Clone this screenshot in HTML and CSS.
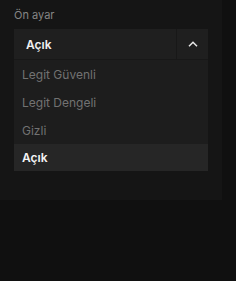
FILE: index.html
```html
<!DOCTYPE html>
<html>
<head>
<meta charset="utf-8">
<link rel="stylesheet" href="styles.css">
</head>
<body>
<div class="panel">
  <div class="label">Ön ayar</div>
  <div class="select">
    <div class="value">Açık</div>
    <div class="toggle">
      <svg width="10" height="6" viewBox="0 0 10 6"><path d="M1 5.2 L5 1.2 L9 5.2" fill="none" stroke="#e8e8e8" stroke-width="1.5"/></svg>
    </div>
  </div>
  <div class="list">
    <div class="item">Legit Güvenli</div>
    <div class="item">Legit Dengeli</div>
    <div class="item">Gizli</div>
    <div class="item active">Açık</div>
  </div>
</div>
</body>
</html>
```
FILE: styles.css
```css
html, body {
  margin: 0;
  padding: 0;
  background: #101010;
  font-family: Inter, "Noto Sans", sans-serif;
}
.panel {
  width: 194px;
  height: 192px;
  padding: 8px 14px 0 14px;
  background: #151515;
}
.label {
  font-size: 11px;
  line-height: 14px;
  color: #858585;
}
.select {
  margin-top: 7px;
  height: 30px;
  display: flex;
  background: #1f1f1f;
  border-bottom: 1px solid #181818;
}
.value {
  flex: 1;
  display: flex;
  align-items: center;
  padding-left: 12px;
  font-size: 12px;
  font-weight: 600;
  color: #f0f0f0;
}
.toggle {
  width: 31px;
  border-left: 1px solid #181818;
  display: flex;
  align-items: center;
  justify-content: center;
}
.list {
  background: #1d1d1d;
}
.item {
  height: 28px;
  display: flex;
  align-items: center;
  padding-left: 8px;
  font-size: 12px;
  color: #727272;
}
.item.active {
  height: 27px;
  background: #262626;
  color: #f4f4f4;
  font-weight: 600;
}
```
